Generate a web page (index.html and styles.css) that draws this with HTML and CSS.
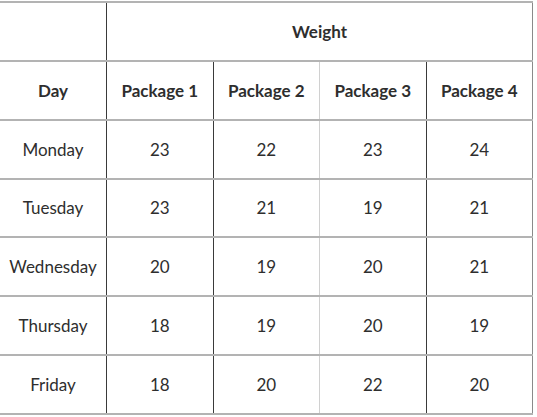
FILE: index.html
```html
<!DOCTYPE html>
<html>
<head>
<meta charset="utf-8">
<link rel="stylesheet" href="styles.css">
</head>
<body>
<table class="grid">
  <colgroup>
    <col class="c"><col class="c"><col class="c"><col class="c"><col class="c">
  </colgroup>
  <thead>
    <tr>
      <th class="corner"></th>
      <th colspan="4">Weight</th>
    </tr>
    <tr>
      <th class="first">Day</th>
      <th>Package 1</th>
      <th class="soft">Package 2</th>
      <th>Package 3</th>
      <th>Package 4</th>
    </tr>
  </thead>
  <tbody>
    <tr><td class="first">Monday</td><td>23</td><td class="soft">22</td><td>23</td><td>24</td></tr>
    <tr><td class="first">Tuesday</td><td>23</td><td class="soft">21</td><td>19</td><td>21</td></tr>
    <tr><td class="first">Wednesday</td><td>20</td><td class="soft">19</td><td>20</td><td>21</td></tr>
    <tr><td class="first">Thursday</td><td>18</td><td class="soft">19</td><td>20</td><td>19</td></tr>
    <tr><td class="first">Friday</td><td>18</td><td class="soft">20</td><td>22</td><td>20</td></tr>
  </tbody>
</table>
</body>
</html>
```
FILE: styles.css
```css
html, body {
  margin: 0;
  padding: 0;
  background: #fff;
}
body {
  padding-top: 1px;
  font-family: Lato, "Open Sans", sans-serif;
  color: #2e2e2e;
}
.grid {
  width: 533px;
  border-collapse: collapse;
  table-layout: fixed;
  font-size: 17px;
}
.grid .c {
  width: 20%;
}
.grid th,
.grid td {
  height: 56.85px;
  padding: 0;
  text-align: center;
  vertical-align: middle;
  border-top: 2px solid #b3b3b3;
  border-bottom: 2px solid #b3b3b3;
  border-left: 1px solid #3a3a3a;
  border-right: 1px solid #3a3a3a;
}
.grid th {
  font-weight: 700;
}
.grid td {
  font-weight: 400;
}
.grid .first,
.grid .corner {
  border-left: none;
}
.grid .soft {
  border-right-color: #d0d0d0;
}
.grid th:last-child,
.grid td:last-child {
  border-right: 1px solid #8a8a8a;
}
```
